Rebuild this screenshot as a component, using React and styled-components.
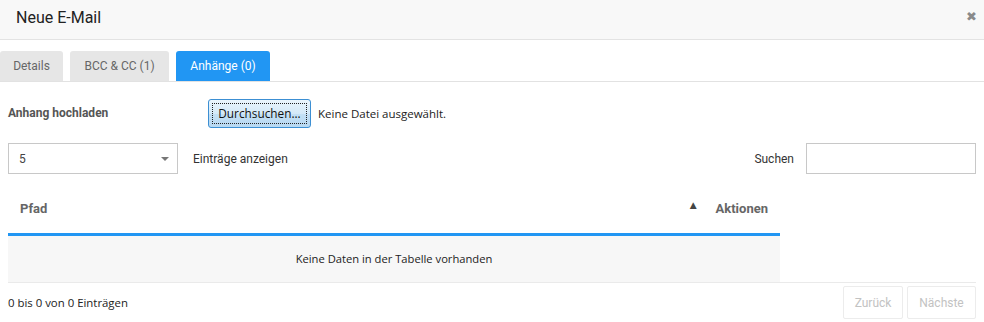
import React from "react";
import styled, { createGlobalStyle } from "styled-components";

const Global = createGlobalStyle`
  html, body { margin: 0; padding: 0; background: #fff; }
  body { font-family: Roboto, "Noto Sans", sans-serif; color: #333; }
  * { box-sizing: border-box; }
`;

const Modal = styled.div`
  width: 984px;
  height: 322px;
  background: #fff;
  overflow: hidden;
`;

const Header = styled.div`
  height: 40px;
  background: #f8f8f8;
  border-bottom: 1px solid #e3e3e3;
  display: flex;
  align-items: center;
  justify-content: space-between;
  padding: 0 7px 0 16px;
`;

const Title = styled.h4`
  margin: 0;
  font-size: 16px;
  font-weight: 400;
  color: #222;
  margin-top: -5px;
`;

const Close = styled.span`
  font-size: 13px;
  color: #8a8a8a;
  font-family: "DejaVu Sans", sans-serif;
  margin-top: -6px;
  font-weight: bold;
`;

const TabList = styled.div`
  display: flex;
  gap: 7px;
  margin-top: 11px;
  border-bottom: 1px solid #e2e2e2;
  height: 31px;
`;

const Tab = styled.div`
  height: 30px;
  width: ${(p) => p.$w}px;
  display: flex;
  align-items: center;
  justify-content: center;
  font-size: 12px;
  border-radius: 3px 3px 0 0;
  background: ${(p) => (p.$active ? "#2196f3" : "#e6e6e6")};
  color: ${(p) => (p.$active ? "#fff" : "#666")};
`;

const Body = styled.div`
  padding: 0 8px;
`;

const UploadRow = styled.div`
  display: flex;
  align-items: center;
  margin-top: 16px;
  height: 30px;
`;

const Label = styled.label`
  width: 200px;
  font-size: 12px;
  font-weight: 700;
  color: #555;
`;

const FileButton = styled.button`
  height: 29px;
  width: 103px;
  padding: 0;
  font-family: "Open Sans", "DejaVu Sans", sans-serif;
  font-size: 11.8px;
  color: #111;
  border: 1px solid #3c8fd3;
  border-radius: 3px;
  background: linear-gradient(#eaf5fc, #d4e9f8 50%, #c4e0f5 51%, #b7d8f1);
  display: flex;
  align-items: center;
  justify-content: center;
  position: relative;
  &::after {
    content: "";
    position: absolute;
    inset: 3px;
    border: 1px dotted #222;
  }
`;

const FileStatus = styled.span`
  margin-left: 7px;
  font-family: "Open Sans", "DejaVu Sans", sans-serif;
  font-size: 11.5px;
  color: #222;
`;

const ControlsRow = styled.div`
  display: flex;
  align-items: center;
  margin-top: 15px;
  height: 31px;
`;

const Select = styled.div`
  width: 170px;
  height: 31px;
  border: 1px solid #c8c8c8;
  display: flex;
  align-items: center;
  justify-content: space-between;
  padding: 0 8px 0 10px;
  font-size: 12px;
  color: #444;
`;

const Caret = styled.span`
  width: 0;
  height: 0;
  border-left: 4px solid transparent;
  border-right: 4px solid transparent;
  border-top: 4px solid #777;
`;

const ShowLabel = styled.span`
  margin-left: 15px;
  font-size: 12px;
  color: #333;
`;

const Spacer = styled.div`
  flex: 1;
`;

const SearchLabel = styled.span`
  font-size: 12px;
  color: #333;
  margin-right: 12px;
`;

const SearchInput = styled.div`
  width: 170px;
  height: 31px;
  border: 1px solid #c8c8c8;
`;

const TableWrap = styled.div`
  margin-top: 17px;
  border-bottom: 1px solid #eaeaea;
`;

const Table = styled.table`
  width: 772px;
  border-collapse: collapse;
`;

const Th = styled.th`
  height: 43px;
  text-align: left;
  font-size: 13px;
  font-weight: 700;
  color: #666;
  padding: 0 ${(p) => p.$pr || 12}px 6px 12px;
  border-bottom: 3px solid #2196f3;
  position: relative;
`;

const SortArrow = styled.span`
  position: absolute;
  right: 7px;
  top: 9px;
  font-size: 9px;
  color: #444;
  font-family: "DejaVu Sans", sans-serif;
`;

const Td = styled.td`
  height: 48px;
  background: #f7f7f7;
  text-align: center;
  font-family: "Open Sans", "DejaVu Sans", sans-serif;
  font-size: 11.2px;
  color: #222;
`;

const Footer = styled.div`
  display: flex;
  align-items: center;
  justify-content: space-between;
  margin-top: 3px;
`;

const Info = styled.span`
  font-family: "Open Sans", "DejaVu Sans", sans-serif;
  font-size: 11.4px;
  color: #222;
`;

const Pager = styled.div`
  display: flex;
  gap: 4px;
`;

const PageButton = styled.button`
  height: 33px;
  width: ${(p) => p.$w}px;
  padding: 0;
  border: 1px solid #ececec;
  border-radius: 2px;
  background: #fff;
  color: #c2c2c2;
  font-family: Roboto, sans-serif;
  font-size: 12px;
`;

export default function App() {
  return (
    <>
      <Global />
      <Modal>
        <Header>
          <Title>Neue E-Mail</Title>
          <Close>✖</Close>
        </Header>
        <TabList>
          <Tab $w={63}>Details</Tab>
          <Tab $w={99}>BCC &amp; CC (1)</Tab>
          <Tab $w={94} $active>Anhänge (0)</Tab>
        </TabList>
        <Body>
          <UploadRow>
            <Label>Anhang hochladen</Label>
            <FileButton>Durchsuchen...</FileButton>
            <FileStatus>Keine Datei ausgewählt.</FileStatus>
          </UploadRow>
          <ControlsRow>
            <Select>
              <span>5</span>
              <Caret />
            </Select>
            <ShowLabel>Einträge anzeigen</ShowLabel>
            <Spacer />
            <SearchLabel>Suchen</SearchLabel>
            <SearchInput />
          </ControlsRow>
          <TableWrap>
            <Table>
              <thead>
                <tr>
                  <Th $pr={24}>
                    Pfad
                    <SortArrow>▲</SortArrow>
                  </Th>
                  <Th style={{ width: 76 }}>Aktionen</Th>
                </tr>
              </thead>
              <tbody>
                <tr>
                  <Td colSpan={2}>Keine Daten in der Tabelle vorhanden</Td>
                </tr>
              </tbody>
            </Table>
          </TableWrap>
          <Footer>
            <Info>0 bis 0 von 0 Einträgen</Info>
            <Pager>
              <PageButton $w={60}>Zurück</PageButton>
              <PageButton $w={69}>Nächste</PageButton>
            </Pager>
          </Footer>
        </Body>
      </Modal>
    </>
  );
}
